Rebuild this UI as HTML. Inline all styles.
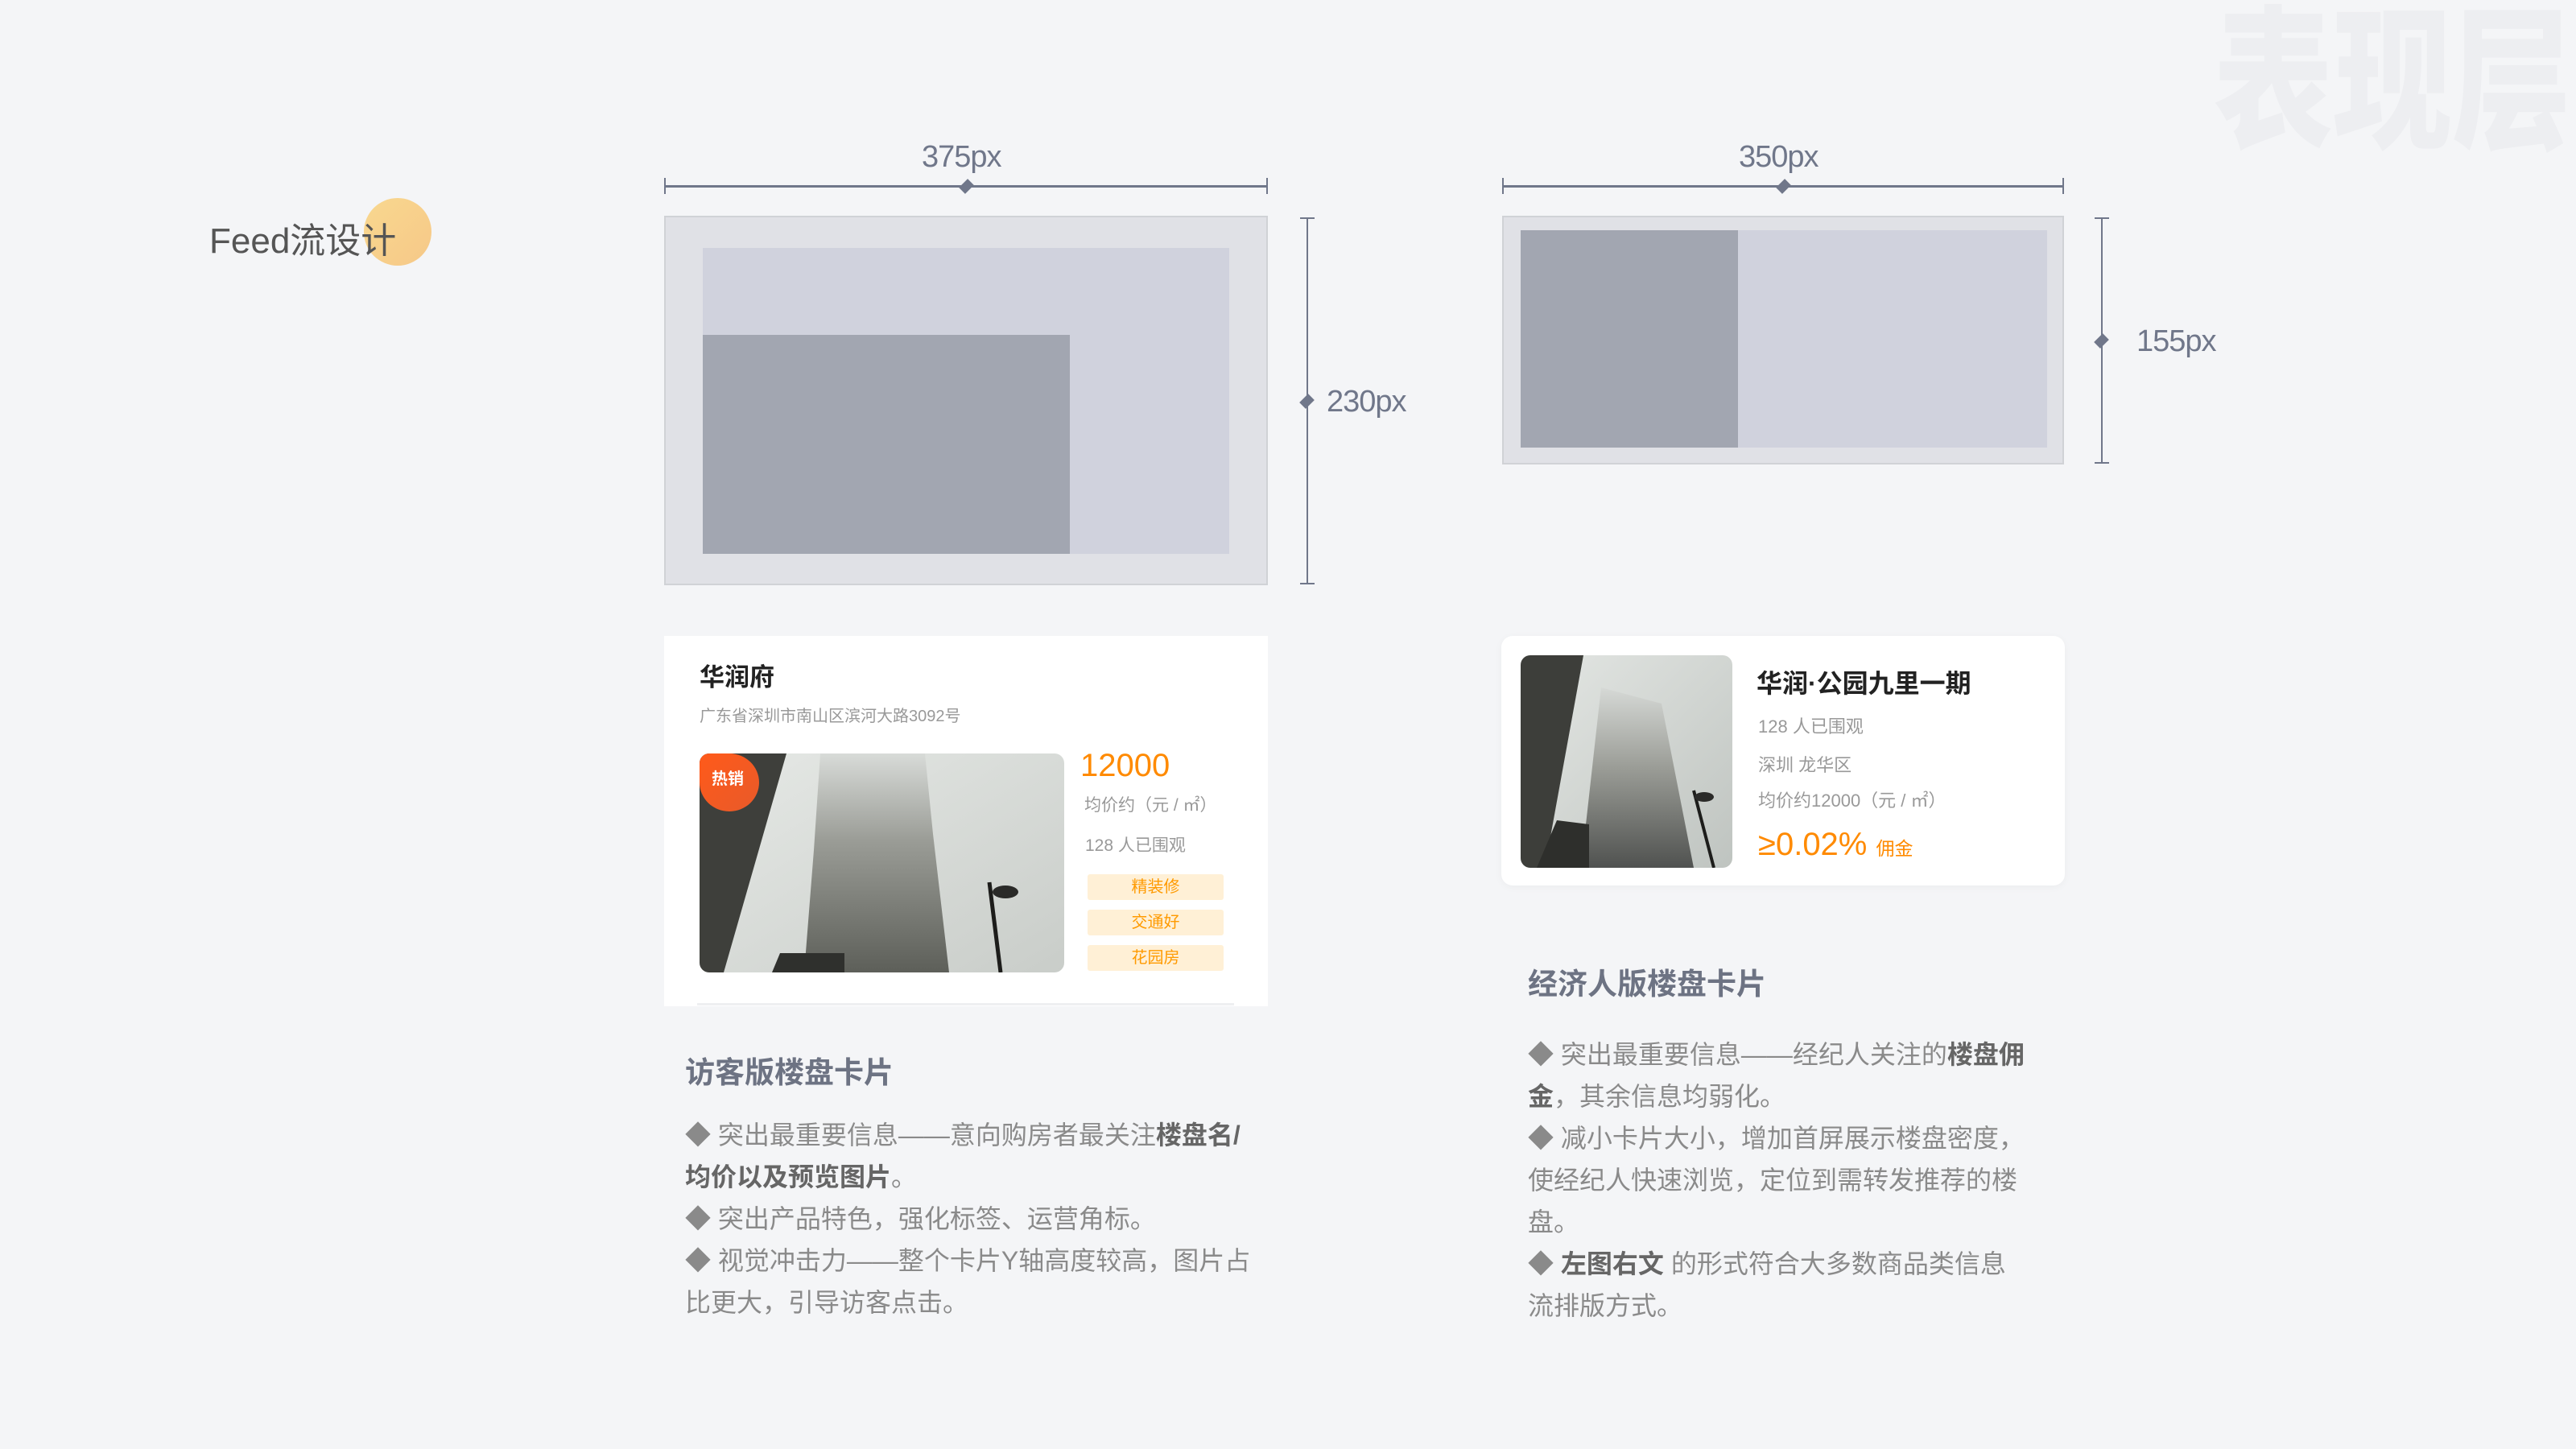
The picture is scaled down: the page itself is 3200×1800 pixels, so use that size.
<!DOCTYPE html>
<html><head><meta charset="utf-8"><style>
*{margin:0;padding:0;box-sizing:border-box}
body{width:3200px;height:1800px;background:#f4f5f7;position:relative;overflow:hidden;font-family:"Liberation Sans","Noto Sans CJK SC",sans-serif}
.a{position:absolute;white-space:nowrap;line-height:1}
.dim{color:#70778a;font-size:38px;letter-spacing:-1px}
.ln{position:absolute;background:#70778a}
.dia{position:absolute;width:11px;height:11px;background:#70778a;transform:rotate(45deg) scaleY(1.4)}
.g{color:#8a8a8a;font-size:32px;line-height:52px}
.g b{color:#666;font-weight:bold}
.tag{position:absolute;left:1351px;width:169px;height:32px;background:#fff0d6;border-radius:3px;color:#ff9a00;font-size:20px;text-align:center;line-height:32px}
</style></head><body>
<div class="a" style="left:2750px;top:-10px;font-size:148px;font-weight:900;color:#edeef1;transform:scaleY(1.3);transform-origin:0 0;font-family:'Noto Sans CJK SC',sans-serif">表现层</div>

<div style="position:absolute;left:452px;top:246px;width:84px;height:84px;border-radius:50%;background:linear-gradient(135deg,#f9d88f,#f6c888)"></div>
<div class="a" style="left:260px;top:278px;font-size:44px;color:#555">Feed流设计</div>

<div class="a dim" style="left:1145px;top:176px">375px</div>
<div class="ln" style="left:825px;top:230px;width:750px;height:3px"></div>
<div class="ln" style="left:825px;top:221px;width:2px;height:20px"></div>
<div class="ln" style="left:1573px;top:221px;width:2px;height:20px"></div>
<div class="dia" style="left:1195px;top:226px"></div>
<div style="position:absolute;left:825px;top:268px;width:750px;height:459px;background:#e0e1e6;border:2px solid #d0d2d6"></div>
<div style="position:absolute;left:873px;top:308px;width:654px;height:380px;background:#d0d2dd"></div>
<div style="position:absolute;left:873px;top:416px;width:456px;height:272px;background:#a2a6b1"></div>
<div class="ln" style="left:1623px;top:270px;width:2px;height:456px"></div>
<div class="ln" style="left:1615px;top:270px;width:18px;height:2px"></div>
<div class="ln" style="left:1615px;top:724px;width:18px;height:2px"></div>
<div class="dia" style="left:1618px;top:493px"></div>
<div class="a dim" style="left:1648px;top:480px">230px</div>

<div class="a dim" style="left:2160px;top:176px">350px</div>
<div class="ln" style="left:1866px;top:230px;width:698px;height:3px"></div>
<div class="ln" style="left:1866px;top:221px;width:2px;height:20px"></div>
<div class="ln" style="left:2562px;top:221px;width:2px;height:20px"></div>
<div class="dia" style="left:2210px;top:226px"></div>
<div style="position:absolute;left:1866px;top:268px;width:698px;height:309px;background:#e0e1e6;border:2px solid #d0d2d6"></div>
<div style="position:absolute;left:1889px;top:286px;width:654px;height:270px;background:#d0d2dd"></div>
<div style="position:absolute;left:1889px;top:286px;width:270px;height:270px;background:#a2a6b1"></div>
<div class="ln" style="left:2610px;top:270px;width:2px;height:306px"></div>
<div class="ln" style="left:2602px;top:270px;width:18px;height:2px"></div>
<div class="ln" style="left:2602px;top:574px;width:18px;height:2px"></div>
<div class="dia" style="left:2605px;top:418px"></div>
<div class="a dim" style="left:2654px;top:405px">155px</div>

<div style="position:absolute;left:825px;top:790px;width:750px;height:460px;background:#fff"></div>
<div class="a" style="left:869px;top:826px;font-size:31px;color:#222;font-weight:bold">华润府</div>
<div class="a" style="left:869px;top:880px;font-size:20px;color:#999">广东省深圳市南山区滨河大路3092号</div>
<svg style="position:absolute;left:869px;top:936px;border-radius:12px" width="453" height="272" viewBox="0 0 453 272">
<defs><linearGradient id="s1" x1="0" y1="0" x2="1" y2="1"><stop offset="0" stop-color="#e6e9e6"/><stop offset="1" stop-color="#c9cdc9"/></linearGradient>
<linearGradient id="t1" x1="0" y1="0" x2="0" y2="1"><stop offset="0" stop-color="#d8dbd8"/><stop offset="0.4" stop-color="#9a9c96"/><stop offset="1" stop-color="#5d5f59"/></linearGradient></defs>
<rect width="453" height="272" fill="url(#s1)"/>
<polygon points="0,0 108,0 30,272 0,272" fill="#3e3f3b"/>
<polygon points="150,0 280,0 290,100 310,272 130,272 142,120" fill="url(#t1)"/>
<polygon points="90,272 100,248 180,248 180,272" fill="#2f302d"/>
<line x1="360" y1="160" x2="374" y2="272" stroke="#1d1d1b" stroke-width="5"/>
<ellipse cx="380" cy="172" rx="16" ry="8" fill="#2a2a28"/>
</svg>
<div style="position:absolute;left:869px;top:936px;width:74px;height:72px;border-radius:12px 50% 50% 50%;background:linear-gradient(135deg,#ff5a1a,#e85a2a)"></div>
<div class="a" style="left:884px;top:958px;font-size:20px;color:#fff;font-weight:bold">热销</div>
<div class="a" style="left:1342px;top:931px;font-size:40px;color:#ff8a00">12000</div>
<div class="a" style="left:1347px;top:990px;font-size:21px;color:#999">均价约（元 / ㎡）</div>
<div class="a" style="left:1348px;top:1040px;font-size:21px;color:#999">128 人已围观</div>
<div class="tag" style="top:1086px">精装修</div>
<div class="tag" style="top:1130px">交通好</div>
<div class="tag" style="top:1174px">花园房</div>
<div style="position:absolute;left:866px;top:1246px;width:667px;height:3px;background:#eeeff1"></div>

<div style="position:absolute;left:1865px;top:790px;width:700px;height:310px;background:#fff;border-radius:14px;box-shadow:0 2px 10px rgba(0,0,0,0.04)"></div>
<svg style="position:absolute;left:1889px;top:814px;border-radius:12px" width="263" height="264" viewBox="0 0 263 264">
<defs><linearGradient id="s2" x1="0" y1="0" x2="1" y2="1"><stop offset="0" stop-color="#e4e7e4"/><stop offset="1" stop-color="#bfc4c0"/></linearGradient>
<linearGradient id="t2" x1="0" y1="0" x2="0" y2="1"><stop offset="0" stop-color="#d6d9d6"/><stop offset="0.45" stop-color="#9a9c96"/><stop offset="1" stop-color="#505250"/></linearGradient></defs>
<rect width="263" height="264" fill="url(#s2)"/>
<polygon points="0,0 78,0 30,264 0,264" fill="#3d3e3a"/>
<polygon points="100,40 175,60 215,264 75,264" fill="url(#t2)"/>
<polygon points="20,264 45,205 85,210 85,264" fill="#2e2f2c"/>
<line x1="215" y1="168" x2="240" y2="264" stroke="#1d1d1b" stroke-width="4"/>
<ellipse cx="228" cy="176" rx="12" ry="6" fill="#2a2a28"/>
</svg>
<div class="a" style="left:2182px;top:833px;font-size:32px;color:#222;font-weight:bold">华润·公园九里一期</div>
<div class="a" style="left:2184px;top:892px;font-size:22px;color:#999">128 人已围观</div>
<div class="a" style="left:2184px;top:940px;font-size:22px;color:#999">深圳 龙华区</div>
<div class="a" style="left:2184px;top:984px;font-size:22px;color:#999">均价约12000（元 / ㎡）</div>
<div class="a" style="left:2184px;top:1029px;font-size:40px;color:#ff8a00">≥0.02% <span style="font-size:23px">佣金</span></div>

<div class="a" style="left:851px;top:1314px;font-size:37px;font-weight:bold;color:#6d7383">访客版楼盘卡片</div>
<div class="a g" style="left:851px;top:1384px">◆ 突出最重要信息——意向购房者最关注<b>楼盘名/</b><br><b>均价以及预览图片</b>。<br>◆ 突出产品特色，强化标签、运营角标。<br>◆ 视觉冲击力——整个卡片Y轴高度较高，图片占<br>比更大，引导访客点击。</div>

<div class="a" style="left:1898px;top:1204px;font-size:37px;font-weight:bold;color:#6d7383">经济人版楼盘卡片</div>
<div class="a g" style="left:1898px;top:1284px">◆ 突出最重要信息——经纪人关注的<b>楼盘佣</b><br><b>金</b>，其余信息均弱化。<br>◆ 减小卡片大小，增加首屏展示楼盘密度，<br>使经纪人快速浏览，定位到需转发推荐的楼<br>盘。<br>◆ <b>左图右文</b> 的形式符合大多数商品类信息<br>流排版方式。</div>
</body></html>
